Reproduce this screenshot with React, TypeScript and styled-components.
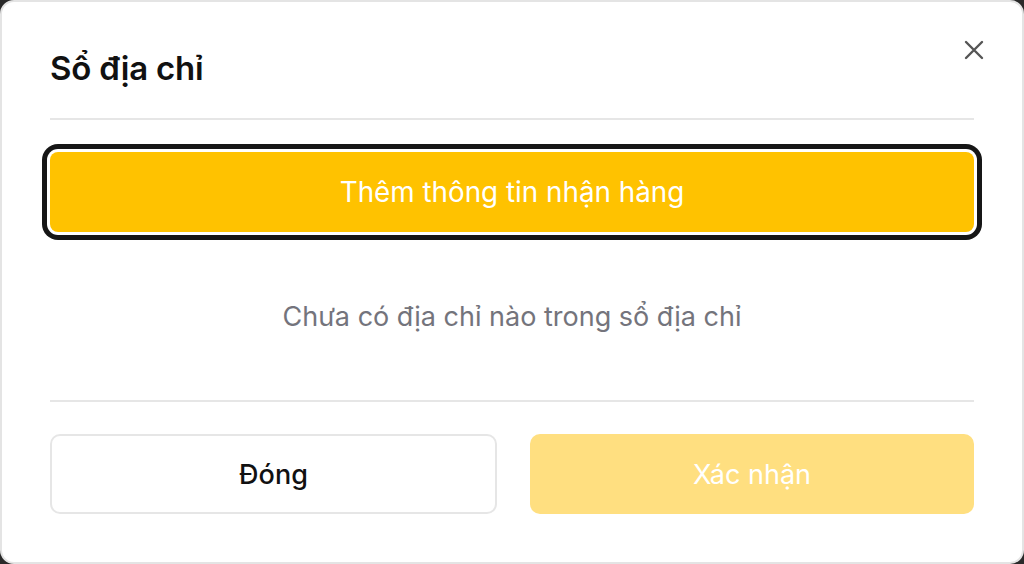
import React from 'react';
import styled, { createGlobalStyle } from 'styled-components';

const GlobalStyle = createGlobalStyle`
  * {
    box-sizing: border-box;
  }

  html,
  body {
    margin: 0;
    padding: 0;
    height: 100%;
    background: #2a2a2a;
  }

  body {
    font-family: Inter, "Noto Sans", "Liberation Sans", sans-serif;
    -webkit-font-smoothing: antialiased;
  }

  #root {
    height: 100%;
  }
`;

const Modal = styled.div`
  width: 1024px;
  height: 564px;
  background: #ffffff;
  border: 2px solid #e4e4e4;
  border-radius: 14px;
  padding: 0 48px;
  display: flex;
  flex-direction: column;
`;

const Header = styled.header`
  height: 116px;
  display: flex;
  justify-content: space-between;
  align-items: flex-start;
`;

const Title = styled.h2`
  margin: 46px 0 0;
  font-size: 33px;
  line-height: 40px;
  font-weight: 600;
  color: #111111;
  letter-spacing: -0.2px;
`;

const CloseButton = styled.button`
  margin: 36px -12px 0 0;
  width: 24px;
  height: 24px;
  padding: 0;
  border: none;
  background: transparent;
  color: #555555;
  display: flex;
  align-items: center;
  justify-content: center;
  cursor: pointer;
`;

const Divider = styled.hr`
  margin: 0;
  border: none;
  height: 2px;
  background: #e6e6e6;
`;

const AddButton = styled.button`
  margin-top: 32px;
  height: 80px;
  border: none;
  border-radius: 8px;
  background: #ffc200;
  color: #ffffff;
  font-family: inherit;
  font-size: 27.8px;
  font-weight: 400;
  box-shadow: 0 0 0 3px #ffffff, 0 0 0 8px #161616;
  cursor: pointer;
`;

const EmptyState = styled.div`
  height: 168px;
  display: flex;
  align-items: center;
  justify-content: center;
  font-size: 27px;
  color: #74747c;
`;

const Footer = styled.footer`
  padding-top: 32px;
  display: grid;
  grid-template-columns: 447px 444px;
  justify-content: space-between;
`;

const FooterButton = styled.button<{ $primary?: boolean }>`
  height: 80px;
  border-radius: 10px;
  font-family: inherit;
  font-size: 27px;
  font-weight: ${({ $primary }) => ($primary ? 400 : 500)};
  cursor: pointer;
  border: ${({ $primary }) => ($primary ? 'none' : '2px solid #e6e6e6')};
  background: ${({ $primary }) => ($primary ? '#ffdf80' : '#ffffff')};
  color: ${({ $primary }) => ($primary ? '#ffffff' : '#111111')};
`;

const App: React.FC = () => {
  return (
    <>
      <GlobalStyle />
      <Modal>
        <Header>
          <Title>Sổ địa chỉ</Title>
          <CloseButton aria-label="Đóng">
            <svg width="24" height="24" viewBox="0 0 24 24" fill="none">
              <path
                d="M4 4L20 20M20 4L4 20"
                stroke="currentColor"
                strokeWidth="2.4"
                strokeLinecap="round"
              />
            </svg>
          </CloseButton>
        </Header>
        <Divider />
        <AddButton>Thêm thông tin nhận hàng</AddButton>
        <EmptyState>Chưa có địa chỉ nào trong sổ địa chỉ</EmptyState>
        <Divider />
        <Footer>
          <FooterButton>Đóng</FooterButton>
          <FooterButton $primary disabled>
            Xác nhận
          </FooterButton>
        </Footer>
      </Modal>
    </>
  );
};

export default App;
